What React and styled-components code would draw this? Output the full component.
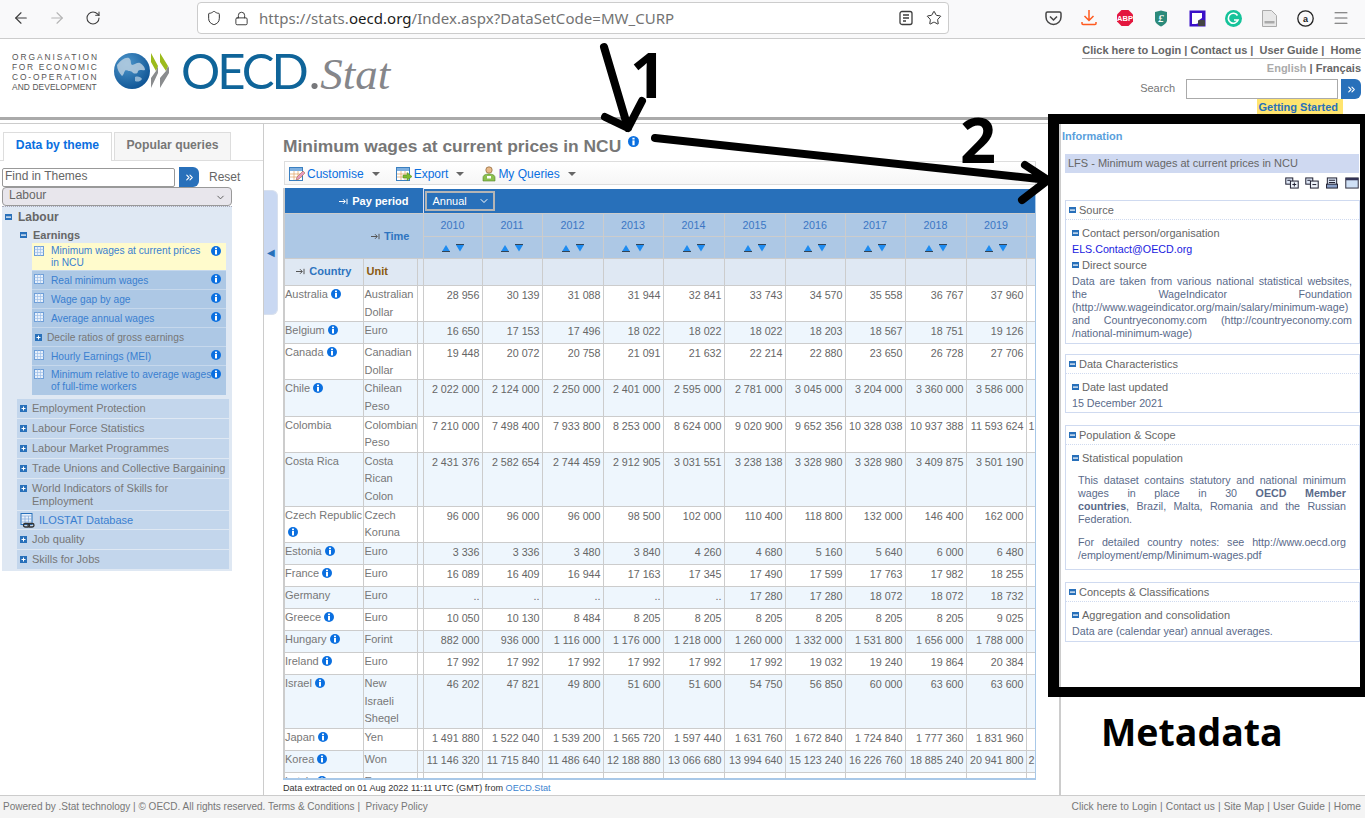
import React from 'react';
import styled, { createGlobalStyle } from 'styled-components';
import { ArrowLeft, ArrowRight, RotateCw, Shield, Lock, Star, Menu, ChevronDown, ChevronsRight } from 'lucide-react';

const GlobalStyle = createGlobalStyle`
  html, body { margin: 0; padding: 0; background: #fff; overflow: hidden; }
  body { font-family: "Liberation Sans", Arial, sans-serif; font-size: 11px; color: #666; }
  * { box-sizing: border-box; }
`;

const Page = styled.div`
  position: relative;
  width: 1365px;
  height: 818px;
  display: flex;
  flex-direction: column;
  overflow: hidden;
`;

/* browser chrome */
const BrowserBar = styled.div`
  height: 39px;
  flex: none;
  background: #f9f9fa;
  border-bottom: 1px solid #ccc;
  display: flex;
  align-items: flex-start;
  padding: 2px 6px 0 3px;
`;
const NavBtn = styled.div`
  width: 36px;
  height: 32px;
  display: flex;
  align-items: center;
  justify-content: center;
  color: ${p => p.$off ? '#b4b4b4' : '#3c3c3c'};
`;
const UrlBar = styled.div`
  width: 752px;
  height: 32px;
  margin-left: 86px;
  margin-right: 86px;
  background: #fff;
  border: 1px solid #ccc;
  border-radius: 4px;
  display: flex;
  align-items: center;
  padding: 0 6px 0 8px;
  color: #333;
`;
const UrlText = styled.div`
  margin-left: 10px;
  flex: 1;
  font-family: "Noto Sans", sans-serif;
  font-size: 15px;
  letter-spacing: 0.04px;
  color: #737373;
  b { font-weight: 400; color: #1a1a1a; }
`;
const UrlIcon = styled.span`
  display: flex;
  margin-left: ${p => p.$gap || 0}px;
`;
const Extensions = styled.div`
  display: flex;
  height: 32px;
`;
const ExtBtn = styled.div`
  width: 36px;
  height: 32px;
  display: flex;
  align-items: center;
  justify-content: center;
`;

/* site header */
const SiteHeader = styled.header`
  height: 78px;
  flex: none;
  display: flex;
  justify-content: space-between;
  padding: 0 4px 0 12px;
`;
const Logo = styled.div`
  display: flex;
  align-items: flex-start;
  padding-top: 14px;
`;
const OrgName = styled.div`
  width: 102px;
  margin-top: -1px;
  font-size: 8.4px;
  line-height: 10.1px;
  color: #555;
  white-space: nowrap;
`;
const OrgLine = styled.div`
  letter-spacing: ${p => p.$ls}px;
`;
const Wordmark = styled.div`
  margin-left: 12px;
  font-family: "Lato", sans-serif;
  font-weight: 400;
  font-size: 49px;
  line-height: 34px;
  letter-spacing: -3px;
  color: #0f6499;
  white-space: nowrap;
  i {
    font-family: "Liberation Serif", serif;
    font-size: 45px;
    letter-spacing: 0;
    color: #85868a;
    margin-left: 3px;
  }
  em { font-style: normal; color: #77787b; margin-left: 3px; }
`;
const HeaderRight = styled.div`
  width: 279px;
  display: flex;
  flex-direction: column;
  align-items: flex-end;
  padding-top: 5px;
`;
const TopLinks = styled.div`
  width: 100%;
  height: 15px;
  border-bottom: 1px solid #aaa;
  font-weight: 700;
  font-size: 11px;
  text-align: right;
  color: #666;
  white-space: nowrap;
`;
const Lang = styled.div`
  margin-top: 3px;
  height: 14px;
  font-weight: 700;
  font-size: 11px;
  color: #666;
  span { color: #aaa; }
`;
const SearchRow = styled.div`
  margin-top: 3px;
  display: flex;
  align-items: center;
  color: #777;
`;
const SearchLabel = styled.span`
  margin-top: -2px;
`;
const SearchInput = styled.div`
  width: 152px;
  height: 20px;
  margin-left: 11px;
  border: 1px solid #aaa;
  background: #fff;
`;
const BlueBtn = styled.div`
  width: 20px;
  height: 20px;
  margin-left: ${p => p.$gap || 3}px;
  background: #2870ba;
  border-radius: 0 6px 6px 0;
  color: #fff;
  display: flex;
  align-items: center;
  justify-content: center;
`;
const Started = styled.div`
  margin-right: 18px;
  height: 15px;
  line-height: 16px;
  padding: 0 5px 0 2px;
  background: #ffe46e;
  color: #2870ba;
  font-weight: 700;
  font-size: 11px;
`;
const Rule = styled.div`
  height: 7px;
  flex: none;
  border-top: 3px solid #aaa;
  border-bottom: 1px solid #ccc;
`;

const Main = styled.div`
  flex: 1;
  display: flex;
  min-height: 0;
`;

/* left panel */
const Sidebar = styled.aside`
  width: 264px;
  flex: none;
  border-right: 1px solid #ccc;
  padding-top: 8px;
`;
const Tabs = styled.div`
  height: 29px;
  display: flex;
  gap: 2px;
  padding-left: 3px;
  border-bottom: 1px solid #ddd;
`;
const Tab = styled.div`
  width: ${p => p.$w}px;
  height: ${p => p.$on ? 29 : 28}px;
  border: 1px solid #ddd;
  border-bottom: 0;
  background: ${p => p.$on ? '#fff' : '#f6f6f6'};
  color: ${p => p.$on ? '#0a6fe0' : '#777'};
  font-weight: 700;
  font-size: 12.2px;
  line-height: 24px;
  text-align: center;
`;
const FindRow = styled.div`
  display: flex;
  align-items: center;
  padding: 6px 0 0 2px;
  height: 26px;
  color: #666;
`;
const FindInput = styled.div`
  width: 173px;
  height: 19px;
  border: 1px solid #999;
  border-radius: 2px;
  padding-left: 2px;
  font-size: 12px;
  line-height: 15px;
  color: #666;
`;
const Reset = styled.span`
  margin-left: 10px;
  font-size: 12px;
  color: #666;
`;
const ThemeSelect = styled.div`
  width: 230px;
  height: 19px;
  margin-left: 2px;
  background: #e8e6ec;
  border: 1px solid #999;
  border-radius: 4px;
  padding-left: 6px;
  font-size: 12px;
  line-height: 15px;
  color: #666;
  display: flex;
  justify-content: space-between;
  svg { margin: 4px 5px 0 0; color: #555; }
`;
const Tree = styled.div`
  width: 230px;
  height: 365px;
  margin-left: 2px;
  background: #dfe8f3;
  border-top: 1px dotted #aab;
`;
const TreeRoot = styled.div`
  height: 18px;
  padding: 2px 0 0 3px;
  display: flex;
  align-items: center;
  gap: 6px;
  font-weight: 700;
  font-size: 12px;
  color: #666;
`;
const TreeBranch = styled.div`
  height: 18px;
  padding: 1px 0 0 18px;
  display: flex;
  align-items: center;
  gap: 6px;
  font-weight: 700;
  font-size: 11px;
  color: #666;
`;
const Themes = styled.div`
  margin-left: 30px;
  width: 194px;
  background: #adc8e5;
`;
const Theme = styled.div`
  position: relative;
  min-height: ${p => p.$h}px;
  display: flex;
  background: ${p => p.$active ? '#fffbcc' : 'transparent'};
  border-bottom: 1px solid #c6d8ec;
  padding: ${p => p.$active ? 2 : p.$h > 20 ? 3 : 4}px ${p => p.$active ? 24 : 14}px 0 19px;
  font-size: 10.2px;
  line-height: 12px;
  color: ${p => p.$plain ? '#777' : '#3a7fd0'};
  ${p => p.$plain && 'padding: 1px 0 0 3px; gap: 5px; align-items: center; white-space: nowrap;'}
  &:last-child { border-bottom: 0; }
`;
const ThemeIcon = styled.span`
  position: absolute;
  left: 2px;
  top: 3px;
  display: flex;
`;
const ThemeInfo = styled.span`
  position: absolute;
  right: 5px;
  top: 3px;
  display: flex;
`;
const Categories = styled.div`
  margin: 4px 0 0 15px;
  width: 212px;
  display: flex;
  flex-direction: column;
  gap: 1px;
`;
const Category = styled.div`
  min-height: ${p => p.$h || 19}px;
  background: #c3d6ec;
  display: flex;
  gap: 5px;
  padding: 3px 0 0 3px;
  line-height: 13px;
  font-size: 11px;
  color: ${p => p.$link ? '#3a7fd0' : '#777'};
  svg { flex: none; margin-top: 3px; }
`;

/* centre */
const Center = styled.section`
  width: 795px;
  flex: none;
  display: flex;
`;
const Collapse = styled.div`
  width: 14px;
  height: 125px;
  margin-top: 66px;
  flex: none;
  background: #c9d8f2;
  border-radius: 0 6px 6px 0;
  border: 1px solid #d8e0ee;
  border-left: 0;
  color: #2870ba;
  font-size: 10px;
  display: flex;
  align-items: center;
  justify-content: center;
`;
const Content = styled.div`
  width: 771px;
  margin-left: 6px;
  display: flex;
  flex-direction: column;
`;
const Title = styled.div`
  height: 37px;
  margin-left: -1px;
  padding-top: 12px;
  display: flex;
  align-items: flex-start;
  white-space: nowrap;
  font-weight: 700;
  font-size: 17.4px;
  line-height: 20px;
  color: #777;
  svg { margin: 0 0 0 7px; }
`;
const Toolbar = styled.div`
  width: 752px;
  height: 24px;
  flex: none;
  display: flex;
  align-items: center;
  padding: 1px 0 0 4px;
  background: linear-gradient(#fff, #f6f6f6);
  border: 1px solid #ddd;
`;
const ToolItem = styled.div`
  display: flex;
  align-items: center;
  margin-right: ${p => p.$mr}px;
  font-size: 12px;
  color: #0a6fe0;
  svg { margin-right: 2px; }
`;
const Caret = styled.span`
  width: 0;
  height: 0;
  margin-left: 8px;
  border: 4px solid transparent;
  border-top: 4px solid #666;
  border-bottom: 0;
`;
const TableWrap = styled.div`
  width: 753px;
  height: 592px;
  margin: 3px 0 0 -1px;
  flex: none;
  overflow: hidden;
  border-right: 1px solid #a8c8e8;
  border-bottom: 2px solid #a8c8e8;
`;
const DataTable = styled.table`
  border-collapse: collapse;
  table-layout: fixed;
  width: 752px;
  border-left: 2px solid #ccc;
  font-size: 11px;
`;
const PayHead = styled.th`
  height: 25px;
  background: #2870ba;
  color: #fff;
  font-size: 11px;
  text-align: right;
  padding: 0 14px 0 0;
  border: 1px solid #2870ba;
  border-right-color: #dde;
  border-bottom-color: #ccc;
`;
const PayCell = styled.td`
  background: #2870ba;
  padding: 0 0 0 1px;
  border: 0;
  border-bottom: 1px solid #ccc;
`;
const PaySelect = styled.div`
  width: 70px;
  height: 20px;
  border: 2px solid #b5b5b5;
  color: #fff;
  font-size: 11px;
  padding: 0 0 0 6px;
  line-height: 16px;
  display: flex;
  justify-content: space-between;
  align-items: center;
  svg { margin-right: 3px; }
`;
const AxisHead = styled.th`
  background: ${p => p.$bg};
  color: ${p => p.$c || '#2e74c0'};
  font-size: 11px;
  font-weight: 700;
  text-align: ${p => p.$left ? 'left' : 'right'};
  padding: ${p => p.$pad};
  border: 1px solid #ccc;
  white-space: nowrap;
`;
const CountryHeadRow = styled.tr`
  height: 27px;
`;
const YearCell = styled.td`
  height: 23px;
  background: #adc8e5;
  color: #3a76c4;
  text-align: center;
  font-size: 10.7px;
  padding: 0;
  border: 1px solid #ccc;
`;
const SortCell = styled(YearCell)`
  height: 22px;
  svg { display: block; margin: 0 auto; }
`;
const BlankCell = styled.td`
  background: #dfe8f3;
  border: 1px solid #ccc;
  padding: 0;
`;
const Row = styled.tr`
  background: ${p => p.$alt ? '#eef6fd' : '#fff'};
`;
const TextCell = styled.td`
  height: ${p => p.$h}px;
  vertical-align: top;
  line-height: 17.6px;
  padding: 0 0 0 1px;
  border: 1px solid #ccc;
  color: #777;
  &:first-child { padding-left: 0; }
  svg { vertical-align: -1px; margin-left: 3px; }
`;
const CountryName = styled.span`
  white-space: nowrap;
`;
const NumCell = styled.td`
  vertical-align: top;
  text-align: right;
  line-height: 17.6px;
  font-size: 10.7px;
  padding: 1px 2px 0 0;
  border: 1px solid #ccc;
  color: #666;
  white-space: nowrap;
  overflow: hidden;
`;
const EdgeCell = styled(NumCell)`
  text-align: left;
  padding-left: 2px;
`;
const Extract = styled.div`
  height: 14px;
  flex: none;
  margin-left: -1px;
  font-size: 9.1px;
  line-height: 16px;
  color: #333;
  span { color: #3a84d0; }
`;

/* right panel */
const Meta = styled.aside`
  flex: 1;
  border-left: 2px solid #ccc;
  padding: 0 0 0 1px;
  min-width: 0;
`;
const MetaLabel = styled.div`
  padding-top: 6px;
  height: 30px;
  font-weight: 700;
  font-size: 11px;
  color: #5a9fdc;
`;
const MetaTitle = styled.div`
  margin-left: 3px;
  width: 294px;
  height: 19px;
  background: #cfd9f1;
  padding-left: 3px;
  font-size: 11px;
  line-height: 18px;
  color: #666;
`;
const MetaTools = styled.div`
  width: 297px;
  height: 27px;
  display: flex;
  justify-content: flex-end;
  gap: 6px;
  padding-top: 4px;
`;
const Box = styled.div`
  margin: 0 0 ${p => p.$mb}px 3px;
  width: 295px;
  height: ${p => p.$h}px;
  border: 1px solid #cfdaf0;
`;
const BoxHead = styled.div`
  height: 19px;
  display: flex;
  align-items: center;
  gap: 3px;
  padding-left: 3px;
  border-bottom: 1px dotted #cfdaf0;
  color: #666;
`;
const BoxBody = styled.div`
  padding: 5px 7px 0 6px;
`;
const SubHead = styled.div`
  height: 16px;
  display: flex;
  align-items: center;
  gap: 3px;
  color: #666;
`;
const Value = styled.div`
  height: 16px;
  line-height: 16px;
  font-size: 10.7px;
  color: ${p => p.$link ? '#1a1ae0' : '#5a6a8a'};
`;
const Para = styled.p`
  margin: ${p => p.$indent ? '8px 6px 10px 6px' : '2px 0 0 0'};
  font-size: 10.7px;
  line-height: 13px;
  text-align: justify;
  color: #5a6a8a;
`;

/* footer */
const Footer = styled.footer`
  height: 23px;
  flex: none;
  background: #f4f4f4;
  border-top: 1px solid #ccc;
  display: flex;
  justify-content: space-between;
  padding: 0 4px 0 3px;
  font-size: 10px;
  line-height: 21px;
  color: #777;
  white-space: pre;
`;
const FooterRight = styled.span`
  font-size: 10.2px;
  word-spacing: 0.3px;
`;

/* annotations drawn over the screenshot */
const Frame = styled.div`
  position: absolute;
  left: 1048px;
  top: 114px;
  width: 317px;
  height: 583px;
  border: solid #000;
  border-width: 10px 5px 10px 11px;
  pointer-events: none;
`;
const Arrows = styled.svg`
  position: absolute;
  left: 0;
  top: 0;
  pointer-events: none;
`;
const Numeral = styled.div`
  position: absolute;
  left: ${p => p.$x}px;
  top: ${p => p.$y}px;
  font-family: "Open Sans", sans-serif;
  font-weight: 700;
  font-size: 63px;
  line-height: 60px;
  color: #000;
`;
const MetaCaption = styled.div`
  position: absolute;
  left: 1101px;
  top: 709px;
  font-family: "Open Sans", sans-serif;
  font-weight: 700;
  font-size: 37.5px;
  line-height: 46px;
  color: #000;
`;

/* small drawings */
const InfoIcon = ({ size = 10 }) => (
  <svg width={size} height={size} viewBox="0 0 10 10">
    <circle cx="5" cy="5" r="5" fill="#0a6fe0" />
    <rect x="4" y="1.6" width="2" height="1.6" fill="#fff" />
    <rect x="4" y="4" width="2" height="4.4" fill="#fff" />
  </svg>
);
const MinusBox = () => (
  <svg width="7" height="6" viewBox="0 0 7 6" style={{ flex: 'none' }}>
    <rect width="7" height="6" fill="#2870ba" />
    <rect x="1" y="2.500" width="5" height="1.200" fill="#fff" />
  </svg>
);
const PlusBox = () => (
  <svg width="7" height="7" viewBox="0 0 7 7">
    <rect width="7" height="7" fill="#2870ba" />
    <path d="M1.500 3.500h4M3.500 1.500v4" stroke="#fff" strokeWidth="1" />
  </svg>
);
const GridIcon = () => (
  <svg width="10" height="10" viewBox="0 0 10 10">
    <rect x=".5" y=".5" width="9" height="9" fill="#e8f0fa" stroke="#6f9fd8" />
    <path d="M.5 3.500h9M.5 6.500h9M3.500.5v9M6.500.5v9" stroke="#9dbfe8" strokeWidth=".7" />
  </svg>
);
const PinIcon = ({ color }) => (
  <svg width="9" height="7" viewBox="0 0 9 7" style={{ marginRight: 4 }}>
    <path d="M0 3.500h6M4 1.200l2.300 2.300L4 5.800M8 .8v5.400" fill="none" stroke={color} strokeWidth="1" />
  </svg>
);
const SortIcon = () => (
  <svg width="22" height="8" viewBox="0 0 22 8">
    <path d="M0 7.500L4 1l4 6.500z" fill="#1f8cf0" />
    <path d="M0 7h8v1H0z" fill="#345" />
    <path d="M14 1l4 6.500 4-6.500z" fill="#1f8cf0" />
    <path d="M14 0h8v1h-8z" fill="#345" />
  </svg>
);
const CustomiseIcon = () => (
  <svg width="16" height="16" viewBox="0 0 16 16">
    <rect x=".5" y="1.500" width="13" height="13" fill="#fff" stroke="#3a7fc0" />
    <rect x="1" y="2" width="12" height="3" fill="#7fb0e0" />
    <path d="M1 8h12M1 11h12M5 5v9M9 5v9" stroke="#e0a060" strokeWidth=".7" />
    <path d="M7 14l1-3 6-6 2 2-6 6z" fill="#e79ac0" stroke="#a06030" strokeWidth=".5" />
  </svg>
);
const ExportIcon = () => (
  <svg width="16" height="16" viewBox="0 0 16 16">
    <rect x=".5" y="1.500" width="13" height="13" fill="#fff" stroke="#3a7fc0" />
    <rect x="1" y="2" width="12" height="3" fill="#7fb0e0" />
    <path d="M1 8h12M1 11h12M5 5v9M9 5v9" stroke="#e0a060" strokeWidth=".7" />
    <path d="M7 9h4V6.500l5 4-5 4V12H7z" fill="#7cb82f" stroke="#4f8a1a" strokeWidth=".5" />
  </svg>
);
const PersonIcon = () => (
  <svg width="14" height="16" viewBox="0 0 14 16">
    <circle cx="7" cy="4" r="3.200" fill="#e8b98a" stroke="#7a5020" strokeWidth=".6" />
    <path d="M1 15v-3.500C1 9 4 8 7 8s6 1 6 3.500V15z" fill="#8dc050" stroke="#55852a" strokeWidth=".6" />
    <rect x="5" y="10" width="4" height="2.500" fill="#fff" />
  </svg>
);
const ExpandIcon = ({ kind }) => (
  <svg width="14" height="12" viewBox="0 0 18 15">
    {kind === 'print' ? (
      <>
        <rect x="3" y="1" width="12" height="12" fill="#dde6f5" stroke="#223" strokeWidth="1.300" />
        <path d="M5 4h8M5 7h8" stroke="#223" strokeWidth="1.300" />
        <rect x="2" y="9" width="14" height="5" fill="#8aa0c8" stroke="#223" strokeWidth="1.300" />
      </>
    ) : kind === 'win' ? (
      <>
        <rect x="1" y="1" width="16" height="13" fill="#cfe0f5" stroke="#334" strokeWidth="1.300" />
        <rect x="1" y="1" width="16" height="3" fill="#335" />
      </>
    ) : (
      <>
        <rect x="1" y="1" width="9" height="8" fill="#dde6f5" stroke="#223" strokeWidth="1.300" />
        <rect x="7" y="5" width="10" height="9" fill="#eef3fb" stroke="#223" strokeWidth="1.300" />
        <path d={kind === 'plus' ? 'M9.500 9.500h5M12 7v5' : 'M9.500 9.500h5'} stroke="#223" strokeWidth="1.300" />
        <path d="M3 4h4" stroke="#223" strokeWidth="1.300" />
      </>
    )}
  </svg>
);
const LinkedGrid = () => (
  <svg width="17" height="15" viewBox="0 0 17 15" style={{ flex: 'none', margin: '-1px -3px 0 0' }}>
    <rect x="1" y=".5" width="11" height="11" fill="#e8f0fa" stroke="#2870ba" />
    <path d="M1 3h11M1 6h11M1 9h11M5 3v8M8.500 3v8" stroke="#7fa8d8" strokeWidth=".7" />
    <rect x="3.500" y="10.500" width="6" height="3.500" rx="1.700" fill="none" stroke="#333" strokeWidth="1.300" />
    <rect x="8" y="10.500" width="6" height="3.500" rx="1.700" fill="none" stroke="#333" strokeWidth="1.300" />
  </svg>
);
const Globe = () => (
  <svg width="36" height="36" viewBox="0 0 36 36" style={{ flex: 'none' }}>
    <defs>
      <radialGradient id="sea" cx="35%" cy="30%" r="80%">
        <stop offset="0" stopColor="#4e97cc" />
        <stop offset="1" stopColor="#0a4f90" />
      </radialGradient>
    </defs>
    <circle cx="18" cy="18" r="18" fill="url(#sea)" />
    <path d="M3 12c4-5 8-8 12-7 3 3 1 5 3 7 3 0 5-3 8-2 3 2 5 4 5 7-3 1-5-1-7 1 0 3-3 3-5 2-2-3-5-1-7-3-2 1-2 5-4 6-3-3-5-7-5-11z" fill="#b9cfe0" opacity=".85" />
    <path d="M21 24c3-1 6 0 7 2-2 3-5 3-7 2z" fill="#8fb4d2" />
  </svg>
);
const Chevrons = () => (
  <svg width="18" height="36" viewBox="0 0 18 36" style={{ flex: 'none', margin: '0 0 0 1px' }}>
    <path d="M0 0l7 13-2 5L0 9zM9 0l8 13-2 5-6-9z" fill="#9cbb1c" />
    <path d="M5 18l2-5v7L0 35V25zM15 18l2-5 1 2v5L9 35V25z" fill="#8a8c8e" />
  </svg>
);

const Pocket = () => (
  <svg width="17" height="16" viewBox="0 0 17 16" fill="none" stroke="#444" strokeWidth="1.500">
    <path d="M2.500 2h12a1.500 1.500 0 0 1 1.500 1.500V7a7.500 7.500 0 0 1-15 0V3.500A1.500 1.500 0 0 1 2.500 2z" />
    <path d="M5 6.500l3.500 3.500L12 6.500" />
  </svg>
);
const DownloadExt = () => (
  <svg width="16" height="16" viewBox="0 0 16 16" fill="none" stroke="#ff5a1f" strokeWidth="1.500">
    <path d="M8 0v10M3.500 6L8 10.500 12.500 6M1 12v1.500a1 1 0 0 0 1 1h12a1 1 0 0 0 1-1V12" />
  </svg>
);
const Abp = () => (
  <svg width="18" height="18" viewBox="0 0 18 18">
    <path d="M5.500 1h7L17 5.500v7L12.500 17h-7L1 12.500v-7z" fill="#e3173e" />
    <text x="9" y="12" fontFamily="Liberation Sans" fontWeight="700" fontSize="7.500" textAnchor="middle" fill="#fff">ABP</text>
  </svg>
);
const LShield = () => (
  <svg width="14" height="17" viewBox="0 0 14 17">
    <path d="M1 2l6-1.500L13 2v8c0 3-3 5-6 6.500C4 15 1 13 1 10z" fill="#2c8a7a" />
    <text x="7" y="12" fontFamily="Liberation Serif" fontStyle="italic" fontWeight="700" fontSize="11" textAnchor="middle" fill="#fff">£</text>
  </svg>
);
const PurpleExt = () => (
  <svg width="17" height="17" viewBox="0 0 17 17">
    <rect x=".5" y=".5" width="16" height="16" fill="#3a10c8" />
    <path d="M3 3h10v5l-3 2v3l-3 1H3z" fill="#fff" />
    <rect x="9" y="10" width="7" height="6" rx="1" fill="#444" />
  </svg>
);
const Grammarly = () => (
  <svg width="17" height="17" viewBox="0 0 17 17">
    <circle cx="8.500" cy="8.500" r="8.500" fill="#15c39a" />
    <path d="M12.500 5.500A5 5 0 1 0 13 10H9" fill="none" stroke="#fff" strokeWidth="1.700" />
  </svg>
);
const DocExt = () => (
  <svg width="15" height="17" viewBox="0 0 15 17">
    <path d="M.5.500h9l5 5v11H.5z" fill="#e8e8e8" stroke="#aaa" />
    <rect x="2.500" y="11" width="10" height="2.500" fill="#aaa" />
  </svg>
);
const AmazonExt = () => (
  <svg width="17" height="17" viewBox="0 0 17 17">
    <circle cx="8.500" cy="8.500" r="7.700" fill="none" stroke="#222" strokeWidth="1.300" />
    <text x="8.500" y="11.500" fontFamily="Liberation Sans" fontWeight="700" fontSize="9" textAnchor="middle" fill="#222">a</text>
  </svg>
);
const ReaderIcon = () => (
  <svg width="16" height="16" viewBox="0 0 16 16" fill="none" stroke="#3c3c3c" strokeWidth="1.300">
    <rect x="2" y="1.500" width="12" height="13" rx="2" />
    <path d="M5 5h6M5 8h6M5 11h3" />
  </svg>
);

const years = [2010, 2011, 2012, 2013, 2014, 2015, 2016, 2017, 2018, 2019];
const colWidths = [79, 54, 6, 59, 60, 61, 60, 61, 61, 60, 60, 61, 60, 9];

const rows = [
  { name: 'Australia', unit: 'Australian Dollar', h: 36, v: ['28 956', '30 139', '31 088', '31 944', '32 841', '33 743', '34 570', '35 558', '36 767', '37 960'] },
  { name: 'Belgium', unit: 'Euro', h: 22, v: ['16 650', '17 153', '17 496', '18 022', '18 022', '18 022', '18 203', '18 567', '18 751', '19 126'] },
  { name: 'Canada', unit: 'Canadian Dollar', h: 36, v: ['19 448', '20 072', '20 758', '21 091', '21 632', '22 214', '22 880', '23 650', '26 728', '27 706'] },
  { name: 'Chile', unit: 'Chilean Peso', h: 36, v: ['2 022 000', '2 124 000', '2 250 000', '2 401 000', '2 595 000', '2 781 000', '3 045 000', '3 204 000', '3 360 000', '3 586 000'] },
  { name: 'Colombia', noInfo: true, unit: 'Colombian Peso', h: 36, edge: '1', v: ['7 210 000', '7 498 400', '7 933 800', '8 253 000', '8 624 000', '9 020 900', '9 652 356', '10 328 038', '10 937 388', '11 593 624'] },
  { name: 'Costa Rica', noInfo: true, unit: 'Costa Rican Colon', h: 54, v: ['2 431 376', '2 582 654', '2 744 459', '2 912 905', '3 031 551', '3 238 138', '3 328 980', '3 328 980', '3 409 875', '3 501 190'] },
  { name: 'Czech Republic', unit: 'Czech Koruna', h: 36, v: ['96 000', '96 000', '96 000', '98 500', '102 000', '110 400', '118 800', '132 000', '146 400', '162 000'] },
  { name: 'Estonia', unit: 'Euro', h: 22, v: ['3 336', '3 336', '3 480', '3 840', '4 260', '4 680', '5 160', '5 640', '6 000', '6 480'] },
  { name: 'France', unit: 'Euro', h: 22, v: ['16 089', '16 409', '16 944', '17 163', '17 345', '17 490', '17 599', '17 763', '17 982', '18 255'] },
  { name: 'Germany', noInfo: true, unit: 'Euro', h: 22, v: ['..', '..', '..', '..', '..', '17 280', '17 280', '18 072', '18 072', '18 732'] },
  { name: 'Greece', unit: 'Euro', h: 22, v: ['10 050', '10 130', '8 484', '8 205', '8 205', '8 205', '8 205', '8 205', '8 205', '9 025'] },
  { name: 'Hungary', unit: 'Forint', h: 22, v: ['882 000', '936 000', '1 116 000', '1 176 000', '1 218 000', '1 260 000', '1 332 000', '1 531 800', '1 656 000', '1 788 000'] },
  { name: 'Ireland', unit: 'Euro', h: 22, v: ['17 992', '17 992', '17 992', '17 992', '17 992', '17 992', '19 032', '19 240', '19 864', '20 384'] },
  { name: 'Israel', unit: 'New Israeli Sheqel', h: 54, v: ['46 202', '47 821', '49 800', '51 600', '51 600', '54 750', '56 850', '60 000', '63 600', '63 600'] },
  { name: 'Japan', unit: 'Yen', h: 22, v: ['1 491 880', '1 522 040', '1 539 200', '1 565 720', '1 597 440', '1 631 760', '1 672 840', '1 724 840', '1 777 360', '1 831 960'] },
  { name: 'Korea', unit: 'Won', h: 22, edge: '2', v: ['11 146 320', '11 715 840', '11 486 640', '12 188 880', '13 066 680', '13 994 640', '15 123 240', '16 226 760', '18 885 240', '20 941 800'] },
  { name: 'Latvia', unit: 'Euro', h: 22, v: ['3 287', '3 408', '3 408', '3 840', '3 840', '4 320', '4 440', '4 560', '5 160', '5 160'] },
];

const themes = [
  { label: 'Minimum wages at current prices in NCU', h: 28, active: true },
  { label: 'Real minimum wages', h: 19 },
  { label: 'Wage gap by age', h: 19 },
  { label: 'Average annual wages', h: 19 },
  { label: 'Decile ratios of gross earnings', h: 19, plain: true },
  { label: 'Hourly Earnings (MEI)', h: 19 },
  { label: 'Minimum relative to average wages of full-time workers', h: 29 },
];

const categories = [
  { label: 'Employment Protection' },
  { label: 'Labour Force Statistics' },
  { label: 'Labour Market Programmes' },
  { label: 'Trade Unions and Collective Bargaining' },
  { label: 'World Indicators of Skills for Employment', h: 31 },
  { label: 'ILOSTAT Database', link: true, h: 18 },
  { label: 'Job quality' },
  { label: 'Skills for Jobs' },
];

function App() {
  return (
    <Page>
      <GlobalStyle />
      <BrowserBar>
        <NavBtn><ArrowLeft size={18} strokeWidth={1.5} /></NavBtn>
        <NavBtn $off><ArrowRight size={18} strokeWidth={1.5} /></NavBtn>
        <NavBtn><RotateCw size={16} strokeWidth={1.6} /></NavBtn>
        <UrlBar>
          <UrlIcon><Shield size={16} strokeWidth={1.5} /></UrlIcon>
          <UrlIcon $gap={12}><Lock size={15} strokeWidth={1.5} /></UrlIcon>
          <UrlText>https://stats.<b>oecd.org</b>/Index.aspx?DataSetCode=MW_CURP</UrlText>
          <UrlIcon><ReaderIcon /></UrlIcon>
          <UrlIcon $gap={12}><Star size={16} strokeWidth={1.5} /></UrlIcon>
        </UrlBar>
        <Extensions>
          <ExtBtn><Pocket /></ExtBtn>
          <ExtBtn><DownloadExt /></ExtBtn>
          <ExtBtn><Abp /></ExtBtn>
          <ExtBtn><LShield /></ExtBtn>
          <ExtBtn><PurpleExt /></ExtBtn>
          <ExtBtn><Grammarly /></ExtBtn>
          <ExtBtn><DocExt /></ExtBtn>
          <ExtBtn><AmazonExt /></ExtBtn>
          <ExtBtn><Menu size={18} strokeWidth={1.4} /></ExtBtn>
        </Extensions>
      </BrowserBar>

      <SiteHeader>
        <Logo>
          <OrgName>
            <OrgLine $ls={1.95}>ORGANISATION</OrgLine>
            <OrgLine $ls={1.7}>FOR ECONOMIC</OrgLine>
            <OrgLine $ls={1.87}>CO-OPERATION</OrgLine>
            <OrgLine $ls={0.1}>AND DEVELOPMENT</OrgLine>
          </OrgName>
          <Globe />
          <Chevrons />
          <Wordmark>OECD<em>.</em><i>Stat</i></Wordmark>
        </Logo>
        <HeaderRight>
          <TopLinks>Click here to Login | Contact us |&nbsp; User Guide |&nbsp; Home</TopLinks>
          <Lang><span>English</span> | Français</Lang>
          <SearchRow>
            <SearchLabel>Search</SearchLabel>
            <SearchInput />
            <BlueBtn><ChevronsRight size={11} strokeWidth={2.4} /></BlueBtn>
          </SearchRow>
          <Started>Getting Started</Started>
        </HeaderRight>
      </SiteHeader>
      <Rule />

      <Main>
        <Sidebar>
          <Tabs>
            <Tab $w={109} $on>Data by theme</Tab>
            <Tab $w={117}>Popular queries</Tab>
          </Tabs>
          <FindRow>
            <FindInput>Find in Themes</FindInput>
            <BlueBtn $gap={4}><ChevronsRight size={11} strokeWidth={2.4} /></BlueBtn>
            <Reset>Reset</Reset>
          </FindRow>
          <ThemeSelect>Labour<ChevronDown size={11} /></ThemeSelect>
          <Tree>
            <TreeRoot><MinusBox />Labour</TreeRoot>
            <TreeBranch><MinusBox />Earnings</TreeBranch>
            <Themes>
              {themes.map(t => (
                <Theme key={t.label} $h={t.h} $active={t.active} $plain={t.plain}>
                  {t.plain ? <PlusBox /> : <ThemeIcon><GridIcon /></ThemeIcon>}
                  <span>{t.label}</span>
                  {!t.plain && <ThemeInfo><InfoIcon /></ThemeInfo>}
                </Theme>
              ))}
            </Themes>
            <Categories>
              {categories.map(c => (
                <Category key={c.label} $h={c.h} $link={c.link}>
                  {c.link ? <LinkedGrid /> : <PlusBox />}
                  <span>{c.label}</span>
                </Category>
              ))}
            </Categories>
          </Tree>
        </Sidebar>

        <Center>
          <Collapse>◀</Collapse>
          <Content>
            <Title>Minimum wages at current prices in NCU<InfoIcon size={11} /></Title>
            <Toolbar>
              <ToolItem $mr={16}><CustomiseIcon />Customise<Caret /></ToolItem>
              <ToolItem $mr={18}><ExportIcon />Export<Caret /></ToolItem>
              <ToolItem $mr={0}><PersonIcon />My Queries<Caret /></ToolItem>
            </Toolbar>
            <TableWrap>
              <DataTable>
                <colgroup>
                  {colWidths.map((w, i) => <col key={i} style={{ width: w }} />)}
                </colgroup>
                <tbody>
                  <tr>
                    <PayHead colSpan={3}><PinIcon color="#fff" />Pay period</PayHead>
                    <PayCell colSpan={11}>
                      <PaySelect>Annual<ChevronDown size={12} /></PaySelect>
                    </PayCell>
                  </tr>
                  <tr>
                    <AxisHead colSpan={3} rowSpan={2} $bg="#adc8e5" $pad="0 13px 0 0"><PinIcon color="#555" />Time</AxisHead>
                    {years.map(y => <YearCell key={y}>{y}</YearCell>)}
                    <YearCell />
                  </tr>
                  <tr>
                    {years.map(y => <SortCell key={y}><SortIcon /></SortCell>)}
                    <SortCell />
                  </tr>
                  <CountryHeadRow>
                    <AxisHead $bg="#dfe8f3" $pad="0 11px 2px 0"><PinIcon color="#555" />Country</AxisHead>
                    <AxisHead $bg="#dfe8f3" $c="#8a5a10" $left $pad="0 0 2px 3px">Unit</AxisHead>
                    <BlankCell />
                    {years.map(y => <BlankCell key={y} />)}
                    <BlankCell />
                  </CountryHeadRow>
                  {rows.map((r, i) => (
                    <Row key={r.name} $alt={i % 2 === 1}>
                      <TextCell $h={r.h}><CountryName>{r.name}</CountryName>{!r.noInfo && <InfoIcon />}</TextCell>
                      <TextCell $h={r.h}>{r.unit}</TextCell>
                      <TextCell $h={r.h} />
                      {r.v.map((n, j) => <NumCell key={j}>{n}</NumCell>)}
                      <EdgeCell>{r.edge}</EdgeCell>
                    </Row>
                  ))}
                </tbody>
              </DataTable>
            </TableWrap>
            <Extract>Data extracted on 01 Aug 2022 11:11 UTC (GMT) from <span>OECD.Stat</span></Extract>
          </Content>
        </Center>

        <Meta>
          <MetaLabel>Information</MetaLabel>
          <MetaTitle>LFS - Minimum wages at current prices in NCU</MetaTitle>
          <MetaTools>
            <ExpandIcon kind="plus" />
            <ExpandIcon kind="minus" />
            <ExpandIcon kind="print" />
            <ExpandIcon kind="win" />
          </MetaTools>
          <Box $h={144} $mb={10}>
            <BoxHead><MinusBox />Source</BoxHead>
            <BoxBody>
              <SubHead><MinusBox />Contact person/organisation</SubHead>
              <Value $link>ELS.Contact@OECD.org</Value>
              <SubHead><MinusBox />Direct source</SubHead>
              <Para>Data are taken from various national statistical websites, the&nbsp;WageIndicator Foundation (http://www.wageindicator.org/main/salary/minimum-wage) and Countryeconomy.com (http://countryeconomy.com<wbr />/national-minimum-wage)</Para>
            </BoxBody>
          </Box>
          <Box $h={59} $mb={12}>
            <BoxHead><MinusBox />Data Characteristics</BoxHead>
            <BoxBody>
              <SubHead><MinusBox />Date last updated</SubHead>
              <Value>15 December 2021</Value>
            </BoxBody>
          </Box>
          <Box $h={145} $mb={12}>
            <BoxHead><MinusBox />Population &amp; Scope</BoxHead>
            <BoxBody>
              <SubHead><MinusBox />Statistical population</SubHead>
              <Para $indent>This dataset contains statutory and national minimum wages in place in 30 <b>OECD Member countries</b>,&nbsp;Brazil,&nbsp;Malta, Romania and the Russian Federation.</Para>
              <Para $indent>For detailed country notes: see http://www.oecd.org<wbr />/employment/emp/Minimum-wages.pdf</Para>
            </BoxBody>
          </Box>
          <Box $h={60} $mb={0}>
            <BoxHead><MinusBox />Concepts &amp; Classifications</BoxHead>
            <BoxBody>
              <SubHead><MinusBox />Aggregation and consolidation</SubHead>
              <Value>Data are (calendar year) annual averages.</Value>
            </BoxBody>
          </Box>
        </Meta>
      </Main>

      <Footer>
        <span>Powered by .Stat technology | © OECD. All rights reserved. Terms &amp; Conditions |  Privacy Policy</span>
        <FooterRight>Click here to Login | Contact us | Site Map | User Guide | Home</FooterRight>
      </Footer>

      <Arrows width="1365" height="818" viewBox="0 0 1365 818" fill="none" stroke="#000" strokeWidth="8" strokeLinecap="round" strokeLinejoin="round">
        <path d="M604 47L628 128M605 117L628 128L642 101" />
        <path d="M655 138L1048 180M1025 165L1048 180L1022 200" />
      </Arrows>
      <Numeral $x={630} $y={44}>1</Numeral>
      <Numeral $x={960} $y={109}>2</Numeral>
      <Frame />
      <MetaCaption>Metadata</MetaCaption>
    </Page>
  );
}

export default App;
